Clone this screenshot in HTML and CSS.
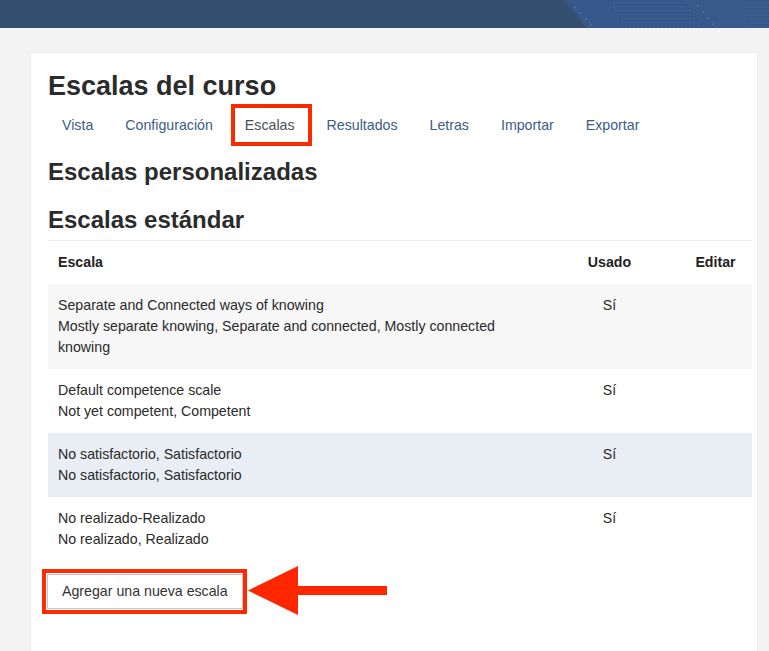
FILE: index.html
```html
<!DOCTYPE html>
<html lang="es">
<head>
<meta charset="utf-8">
<title>Escalas del curso</title>
<link rel="stylesheet" href="styles.css">
</head>
<body>
<header class="topbar">
  <svg class="topbar-art" width="769" height="28" viewBox="0 0 769 28" preserveAspectRatio="none" aria-hidden="true">
    <defs>
      <pattern id="dots" width="4" height="4" patternUnits="userSpaceOnUse">
        <rect x="0" y="0" width="1" height="1" fill="#2f4a6c" />
        <rect x="2" y="2" width="1" height="1" fill="#43659a" />
      </pattern>
    </defs>
    <rect x="0" y="0" width="769" height="28" fill="#344f70" />
    <polygon points="565,0 683,0 705,28 587,28" fill="#37588a" />
    <polygon points="605,0 683,0 705,28 625,28" fill="url(#dots)" opacity="0.8" />
    <polygon points="683,0 769,0 769,28 705,28" fill="#385a8a" />
    <polygon points="740,0 769,0 769,28 750,28" fill="url(#dots)" opacity="0.6" />
    <circle cx="575" cy="7" r="0.7" fill="#6d8cb8" />
    <circle cx="580" cy="13" r="0.7" fill="#6d8cb8" />
    <circle cx="586" cy="19" r="0.7" fill="#6d8cb8" />
    <circle cx="591" cy="25" r="0.7" fill="#6d8cb8" />
    <circle cx="698" cy="6" r="0.7" fill="#6d8cb8" />
    <circle cx="703" cy="12" r="0.7" fill="#6d8cb8" />
    <circle cx="708" cy="18" r="0.7" fill="#6d8cb8" />
    <circle cx="713" cy="24" r="0.7" fill="#6d8cb8" />
  </svg>
</header>

<main class="card">
  <h2 class="page-title">Escalas del curso</h2>
  <nav class="tabs">
    <a class="tab" href="#">Vista</a>
    <a class="tab" href="#">Configuración</a>
    <a class="tab tab-active" href="#">Escalas<span class="mark mark-tab"></span></a>
    <a class="tab" href="#">Resultados</a>
    <a class="tab" href="#">Letras</a>
    <a class="tab" href="#">Importar</a>
    <a class="tab" href="#">Exportar</a>
  </nav>

  <h3 class="section-title">Escalas personalizadas</h3>
  <h3 class="section-title section-title-last">Escalas estándar</h3>

  <table class="scales">
    <colgroup>
      <col class="col-name">
      <col class="col-used">
      <col class="col-edit">
    </colgroup>
    <thead>
      <tr>
        <th class="c-name">Escala</th>
        <th class="c-center">Usado</th>
        <th class="c-center">Editar</th>
      </tr>
    </thead>
    <tbody>
      <tr class="row-striped">
        <td class="c-name">Separate and Connected ways of knowing<br>Mostly separate knowing, Separate and connected, Mostly connected knowing</td>
        <td class="c-center">Sí</td>
        <td></td>
      </tr>
      <tr>
        <td class="c-name">Default competence scale<br>Not yet competent, Competent</td>
        <td class="c-center">Sí</td>
        <td></td>
      </tr>
      <tr class="row-hover">
        <td class="c-name">No satisfactorio, Satisfactorio<br>No satisfactorio, Satisfactorio</td>
        <td class="c-center">Sí</td>
        <td></td>
      </tr>
      <tr>
        <td class="c-name">No realizado-Realizado<br>No realizado, Realizado</td>
        <td class="c-center">Sí</td>
        <td></td>
      </tr>
    </tbody>
  </table>

  <div class="actions">
    <button class="btn" type="button">Agregar una nueva escala</button>
    <span class="mark mark-btn"></span>
    <svg class="arrow" width="140" height="50" viewBox="0 0 140 50" aria-hidden="true">
      <polygon points="0,24.5 50,0 50,20 139,20 139,29 50,29 50,49" fill="#ff2600" />
    </svg>
  </div>
</main>
</body>
</html>
```

FILE: styles.css
```css
* {
  box-sizing: border-box;
}

html, body {
  margin: 0;
  padding: 0;
}

body {
  background: #f3f3f3;
  font-family: "Liberation Sans", Arial, Helvetica, sans-serif;
  font-size: 14.2px;
  line-height: 21px;
  color: #2a2a2a;
  overflow: hidden;
}

.topbar {
  height: 28px;
  background: #344f70;
}

.topbar-art {
  display: block;
  width: 100%;
  height: 28px;
}

.card {
  margin: 24px 0 0 30px;
  width: 728px;
  background: #ffffff;
  border: 1px solid #ebebeb;
  padding: 17px 5px 80px 17px;
}

.page-title {
  margin: 0;
  font-size: 27px;
  line-height: 32.4px;
  font-weight: 700;
  color: #2b2b2b;
}

.tabs {
  display: flex;
  margin: 3px 0 0 -2px;
}

.tab {
  position: relative;
  display: block;
  padding: 10px 16px;
  color: #3c5c87;
  text-decoration: none;
  line-height: 21px;
}

.tab-active {
  color: #4a4f55;
}

.mark {
  position: absolute;
  border: 4px solid #ff2a00;
  pointer-events: none;
}

.mark-tab {
  left: 2px;
  right: -1px;
  top: -1px;
  bottom: 0;
}

.section-title {
  margin: 12px 0 0 0;
  font-size: 24px;
  line-height: 28.8px;
  font-weight: 700;
  color: #2b2b2b;
}

.section-title + .section-title {
  margin-top: 19px;
}

.section-title-last {
  margin-bottom: 5px;
}

.scales {
  width: 704px;
  border-collapse: collapse;
  table-layout: fixed;
  border-top: 1px solid #ececec;
}

.col-name {
  width: 492px;
}

.col-used {
  width: 139px;
}

.col-edit {
  width: 73px;
}

.scales th,
.scales td {
  padding: 11px 10px;
  vertical-align: top;
  text-align: left;
  line-height: 21px;
}

.scales th {
  font-weight: 700;
  color: #222222;
}

.scales td {
  color: #2a2a2a;
}

.scales .c-center {
  text-align: center;
}

.row-striped {
  background: #f7f7f7;
}

.row-hover {
  background: #e9edf4;
}

.actions {
  position: relative;
  margin: 13px 0 0 -1px;
  display: flex;
  align-items: center;
}

.btn {
  font-family: inherit;
  font-size: 14.2px;
  line-height: 21px;
  color: #333333;
  background: #ffffff;
  border: 1px solid #c8c8c8;
  border-radius: 0;
  padding: 6px 14px;
  margin: 0;
}

.mark-btn {
  left: -5px;
  top: -5px;
  width: 205px;
  height: 45px;
}

.arrow {
  position: absolute;
  left: 201px;
  top: -8px;
}
```
